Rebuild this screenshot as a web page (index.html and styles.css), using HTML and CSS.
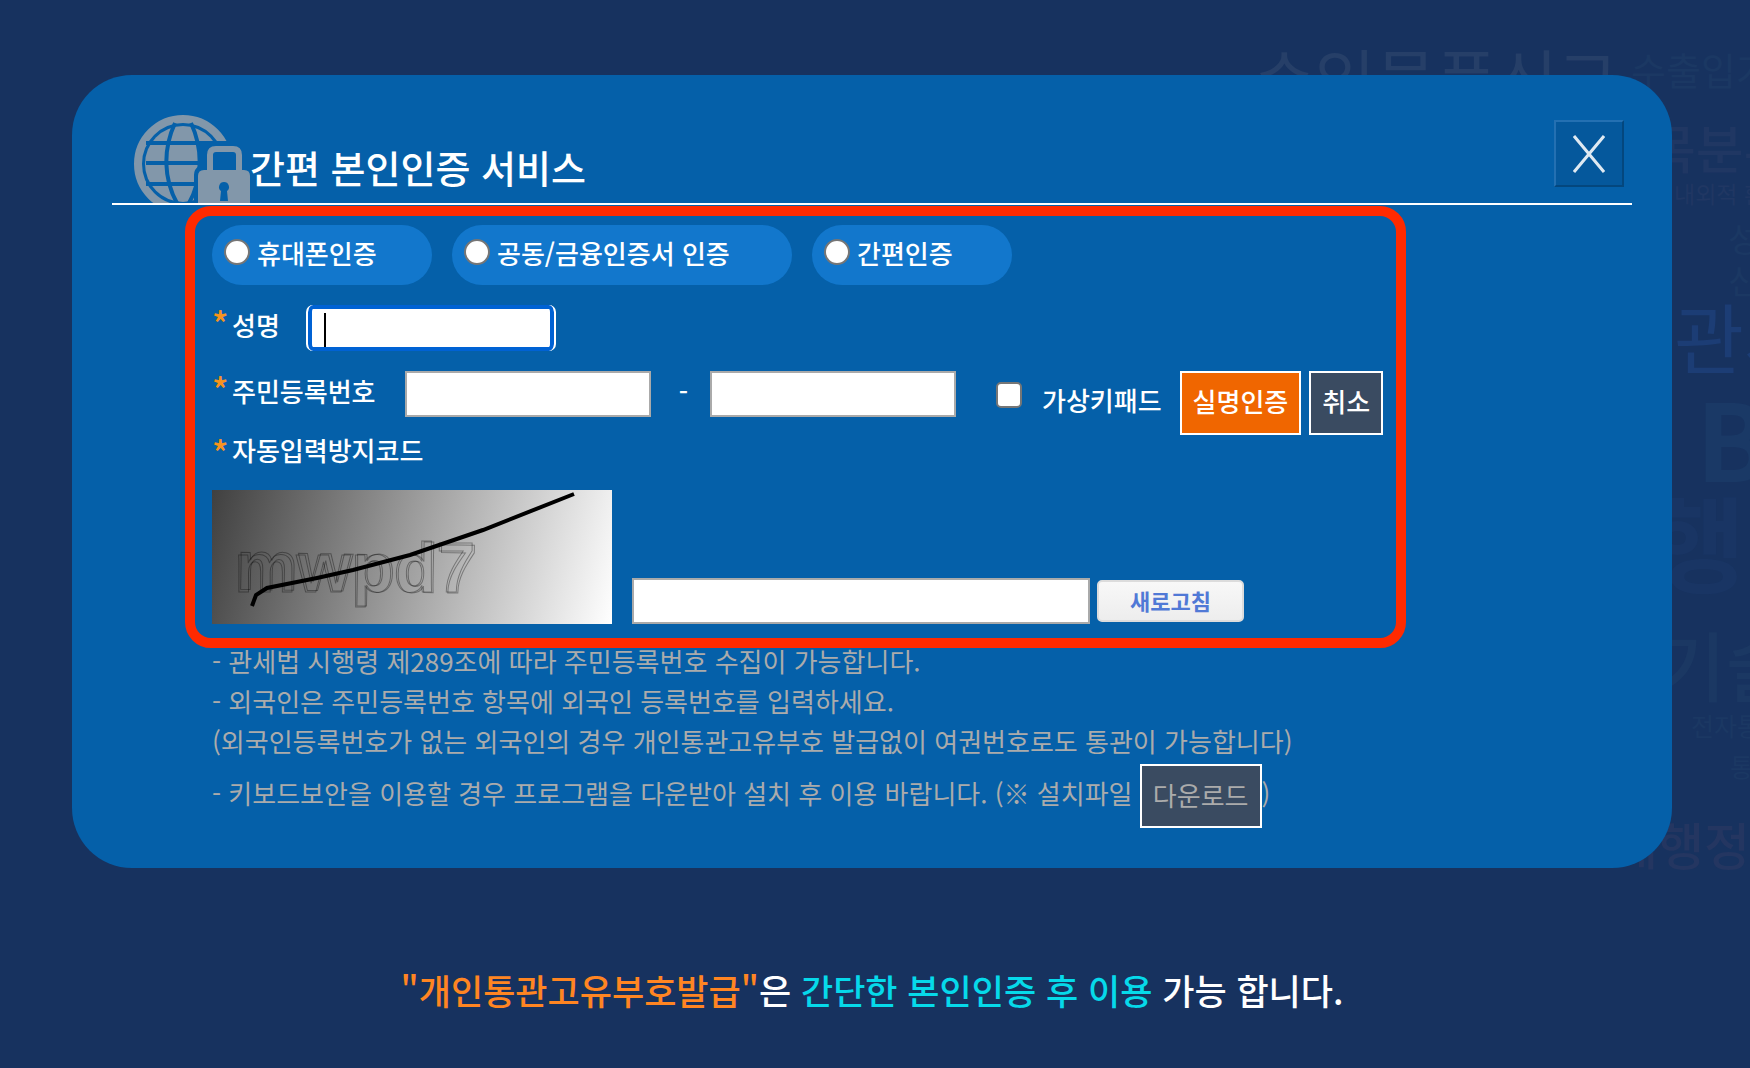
FILE: index.html
```html
<!DOCTYPE html>
<html lang="ko">
<head>
  <meta charset="UTF-8" />
  <meta name="viewport" content="width=device-width, initial-scale=1.0" />
  <title>간편 본인인증 서비스</title>
  <link rel="stylesheet" href="styles.css">
</head>
<body>

<!-- Background word cloud -->
<div class="words" aria-hidden="true">
  <span class="word word-report">수입물품신고</span>
  <span class="word word-export">수출입가</span>
  <span class="word word-item">목분류</span>
  <span class="word word-env">내외적 환</span>
  <span class="word word-sung">성</span>
  <span class="word word-shin">신</span>
  <span class="word word-customs">관세</span>
  <span class="word word-b">B</span>
  <span class="word word-admin">행</span>
  <span class="word word-tech">기술</span>
  <span class="word word-elec">전자통</span>
  <span class="word word-tong">통</span>
  <span class="word word-tax">세행정</span>
</div>

<main class="card">
  <header class="card-header">
    <svg class="logo" width="116" height="88" viewBox="0 0 116 88">
      <circle class="globe-ring" cx="49" cy="49" r="45" />
      <circle class="globe-fill" cx="49" cy="49" r="38" />
      <path class="globe-line" d="M12 28H92M12 48H92M12 69H92" />
      <path class="globe-line" d="M41 8C29 34 29 64 44 90M57 8C69 34 69 64 54 90" />
      <path class="globe-cut" d="M66 26H116V88H60V60Q60 54 65 51Z" />
      <path class="lock-shackle" d="M76 57V40Q76 34 82 34H99Q105 34 105 40V57" />
      <path class="lock-body" d="M64 88V61Q64 55 70 55H110Q116 55 116 61V88Z" />
      <path class="lock-hole" d="M90 67a5 5 0 0 1 3 9l1 10h-8l1-10a5 5 0 0 1 3-9Z" />
    </svg>
    <h1>간편 본인인증 서비스</h1>
    <button type="button" class="close" aria-label="닫기">
      <svg width="32" height="38" viewBox="0 0 32 38">
        <path d="M1 1L31 37M31 1L1 37" />
      </svg>
    </button>
  </header>

  <form id="authForm" class="auth-form">
    <div class="row methods">
      <label class="pill pill-phone"><input type="radio" name="method" />휴대폰인증</label>
      <label class="pill pill-cert"><input type="radio" name="method" />공동/금융인증서 인증</label>
      <label class="pill pill-simple"><input type="radio" name="method" />간편인증</label>
    </div>

    <div class="row name-row">
      <label class="required" for="userName">성명</label>
      <input type="text" id="userName" class="field field-name" />
    </div>

    <div class="row number-row">
      <label class="required" for="rrn1">주민등록번호</label>
      <input type="text" id="rrn1" class="field" />
      <span class="dash">-</span>
      <input type="password" id="rrn2" class="field" aria-label="주민등록번호 뒷자리" />
      <label class="keypad"><input type="checkbox" />가상키패드</label>
      <button type="submit" class="btn btn-verify">실명인증</button>
      <button type="reset" class="btn">취소</button>
    </div>

    <label class="required code-label" for="code">자동입력방지코드</label>
    <div class="row code-row">
      <svg class="captcha" width="400" height="134" viewBox="0 0 400 134">
        <text x="22" y="102">mwpd7</text>
        <text x="24" y="101" transform="rotate(1 130 80)">mwpd7</text>
        <polyline points="40,116 44,105 55,98 105,88 141,80 198,65 271,40 362,4" />
      </svg>
      <input type="text" id="code" class="field field-code" />
      <button type="button" class="refresh">새로고침</button>
    </div>
  </form>

  <div class="notes">
    <p>- 관세법 시행령 제289조에 따라 주민등록번호 수집이 가능합니다.</p>
    <p>- 외국인은 주민등록번호 항목에 외국인 등록번호를 입력하세요.</p>
    <p>(외국인등록번호가 없는 외국인의 경우 개인통관고유부호 발급없이 여권번호로도 통관이 가능합니다)</p>
    <p class="download">- 키보드보안을 이용할 경우 프로그램을 다운받아 설치 후 이용 바랍니다. (※ 설치파일 <a href="#" class="btn btn-download">다운로드</a>)</p>
  </div>
</main>

<p class="guide"><span class="orange">"개인통관고유부호발급"</span>은 <span class="cyan">간단한 본인인증 후 이용</span> 가능 합니다.</p>

</body>
</html>
```

FILE: styles.css
```css
/* General Styling */
* {
  box-sizing: border-box;
}

body {
  position: relative;
  min-height: 100vh;
  margin: 0;
  padding: 75px 78px 0 72px;
  overflow: hidden;
  background-color: #17325f;
  color: #fff;
  font-family: "Noto Sans CJK KR", sans-serif;
  font-size: 26px;
}

input, button {
  margin: 0;
  font-family: inherit;
  font-size: 26px;
}

h1, p {
  margin: 0;
  font-weight: 400;
}

/* Background words */
.words {
  position: absolute;
  inset: 0;
  overflow: hidden;
}

.word {
  position: absolute;
  line-height: 1;
  white-space: nowrap;
  color: #1b3863;
}

.word-report { left: 1254px; top: 43px; font-size: 66px; color: #263f68; }
.word-export { left: 1631px; top: 50px; font-size: 38px; }
.word-item { left: 1648px; top: 121px; font-size: 52px; font-weight: 500; color: #203763; }
.word-env { left: 1674px; top: 182px; font-size: 23px; color: #203763; }
.word-sung { left: 1728px; top: 221px; font-size: 34px; }
.word-shin { left: 1728px; top: 263px; font-size: 34px; }
.word-customs { left: 1674px; top: 297px; font-size: 76px; color: #1c3d75; }
.word-b { left: 1696px; top: 383px; font-size: 106px; font-weight: 700; color: #1a3966; }
.word-admin { left: 1650px; top: 488px; font-size: 104px; font-weight: 700; color: #193564; }
.word-tech { left: 1656px; top: 625px; font-size: 76px; font-weight: 500; }
.word-elec { left: 1691px; top: 713px; font-size: 25px; }
.word-tong { left: 1730px; top: 754px; font-size: 25px; }
.word-tax { left: 1612px; top: 818px; font-size: 50px; font-weight: 500; color: #243661; }

/* Card */
.card {
  position: relative;
  padding: 40px;
  border-radius: 60px;
  background-color: #0560a9;
}

.card-header {
  display: flex;
  align-items: flex-end;
  height: 90px;
  padding: 0 8px 0 22px;
  border-bottom: 2px solid #fff;
}

.card-header h1 {
  flex: 1;
  font-size: 38px;
  font-weight: 500;
  line-height: 72px;
}

.globe-ring { fill: none; stroke: #8297aa; stroke-width: 8; }
.globe-fill, .lock-body { fill: #8297aa; }
.globe-line { fill: none; stroke: #0560a9; stroke-width: 4; }
.globe-cut, .lock-hole { fill: #0560a9; }
.lock-shackle { fill: none; stroke: #8297aa; stroke-width: 6; }

.close {
  display: flex;
  align-items: center;
  justify-content: center;
  width: 70px;
  height: 67px;
  margin-bottom: 16px;
  padding: 0;
  border: 2px solid;
  border-color: #2470b2 #04477e #04477e #2470b2;
  background-color: #05589c;
}

.close path {
  stroke: #dfe9f2;
  stroke-width: 3;
}

/* Form Styling */
.auth-form {
  width: fit-content;
  margin: 1px 0 0 73px;
  padding: 9px 13px 14px 17px;
  border: 10px solid #ff2a00;
  border-radius: 26px;
}

.row {
  display: flex;
  align-items: flex-start;
}

.methods {
  gap: 20px;
}

.pill {
  display: flex;
  align-items: center;
  gap: 7px;
  height: 60px;
  padding: 0 12px 6px;
  border-radius: 30px;
  background-color: #1277cc;
  font-weight: 500;
}

.pill-phone { width: 220px; }
.pill-cert { width: 340px; }
.pill-simple { width: 200px; }

.pill input, .keypad input {
  appearance: none;
  width: 26px;
  height: 26px;
  border: 2px solid #767676;
  border-radius: 50%;
  background-color: #fff;
}

.keypad input {
  border-radius: 5px;
}

.required {
  display: flex;
  font-weight: 500;
  line-height: 40px;
}

.required::before {
  content: "*";
  width: 20px;
  color: #f7931e;
  font-size: 34px;
  line-height: 36px;
}

.field {
  width: 246px;
  height: 46px;
  padding: 4px 12px;
  border: 2px solid #aaa;
  background-color: #fff;
}

.name-row, .number-row {
  margin-top: 20px;
}

.name-row {
  gap: 26px;
}

/* Focused field with its caret */
.field-name {
  width: 250px;
  border-width: 0 2px;
  border-color: #fff;
  border-radius: 7px;
  outline: none;
  background: #fff linear-gradient(#000, #000) no-repeat 16px 8px / 2px 34px;
  box-shadow: inset 0 0 0 4px #0062d4;
}

.number-row .required {
  width: 193px;
}

.dash {
  width: 59px;
  padding-left: 6px;
  font-weight: 500;
  line-height: 40px;
  text-align: center;
}

.keypad {
  display: flex;
  align-items: center;
  gap: 20px;
  margin: 0 18px 0 40px;
  font-weight: 500;
  line-height: 58px;
}

.keypad input {
  margin-bottom: 10px;
}

.btn {
  height: 64px;
  padding: 0 11px 6px;
  border: 2px solid #fff;
  background-color: #3a4b61;
  color: #fff;
  font-weight: 500;
}

.btn-verify {
  margin-right: 8px;
  background-color: #f06600;
}

.code-label {
  height: 30px;
  line-height: 30px;
}

.code-label::before {
  line-height: 34px;
}

.code-row {
  align-items: flex-end;
  margin-top: 25px;
}

.captcha {
  background: linear-gradient(105deg, #404040, #fff);
}

.captcha text {
  fill: none;
  stroke: #000;
  stroke-opacity: 0.35;
  font-family: "Liberation Sans", sans-serif;
  font-size: 70px;
  font-weight: 700;
}

.captcha polyline {
  fill: none;
  stroke: #000;
  stroke-width: 4;
}

.field-code {
  width: 458px;
  margin: 0 7px 0 20px;
}

.refresh {
  width: 147px;
  height: 42px;
  margin-bottom: 2px;
  padding: 0 0 2px;
  border: 2px solid #dcdcdc;
  border-radius: 5px;
  background: linear-gradient(#f8f8f8, #ededed);
  color: #5079d6;
  font-size: 22px;
  font-weight: 700;
  line-height: 1;
}

/* Notes */
.notes {
  margin: -7px 0 0 100px;
  color: #ababab;
  line-height: 40px;
}

.download {
  display: flex;
  padding-top: 3px;
  line-height: 58px;
  white-space: pre;
}

.btn-download {
  color: #ababab;
  font-weight: 400;
  text-decoration: none;
}

.guide {
  position: relative;
  margin-top: 94px;
  font-size: 35px;
  font-weight: 500;
  line-height: 56px;
  text-align: center;
}

.orange {
  color: #ff8522;
}

.cyan {
  color: #06d9ea;
}
```
